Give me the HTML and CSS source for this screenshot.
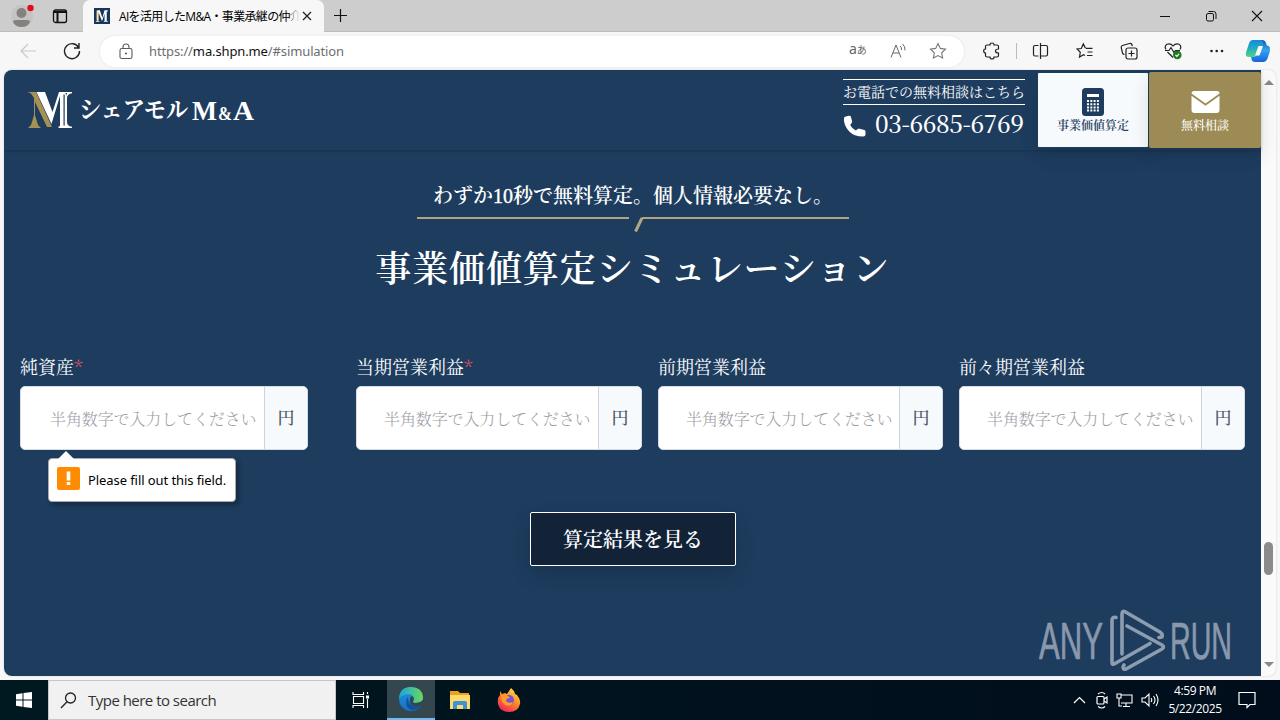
FILE: index.html
```html
<!DOCTYPE html>
<html lang="ja">
<head>
<meta charset="utf-8">
<title>事業価値算定シミュレーション</title>
<link rel="stylesheet" href="styles.css">
</head>
<body>
<div class="tabs">
  <svg class="profile" width="30" height="32" viewBox="0 0 30 32"><circle cx="15" cy="16" r="11" fill="#c6c4c2"/><circle cx="14.500" cy="13" r="5" fill="#85817e"/><path d="M6 22q0-2 3-2h11q3 0 3 2-2 5-8.500 5T6 22z" fill="#85817e"/><circle cx="23.500" cy="8" r="3.200" fill="#e00b1c"/></svg>
  <svg class="workspace" width="16" height="16" viewBox="0 0 16 16" fill="none" stroke="#111" stroke-width="1.300"><rect x="1.500" y="2" width="13" height="12.500" rx="2"/><path d="M2 4h12M5.500 5v9" stroke-width="2"/></svg>
  <div class="tab">
    <svg width="16" height="16" viewBox="0 0 44 36" preserveAspectRatio="none"><path fill="#17365b" d="M0 0h44v36H0z"/><path fill="#a59258" d="M6 6h7v22H6z"/><path fill="#fff" d="M9 5h7l7 17 6-17h9v3h-3v21h3v2H27v-2h2V13l-7 17L12 9v20h3v2H5v-2h4z"/></svg>
    <span class="tab-title">AIを活用したM&amp;A・事業承継の仲<span class="faded">介</span></span>
    <svg class="x" width="10" height="10" viewBox="0 0 10 10"><path d="M1 1l8 8M9 1L1 9" stroke="#222" stroke-width="1.300"/></svg>
  </div>
  <svg class="plus" width="15" height="15" viewBox="0 0 15 15"><path d="M7.500 1v13M1 7.500h13" stroke="#111" stroke-width="1.200"/></svg>
  <div class="window-buttons">
    <svg width="12" height="12" viewBox="0 0 12 12"><path d="M1 6.500h10" stroke="#111"/></svg>
    <svg width="12" height="12" viewBox="0 0 12 12" fill="none" stroke="#111"><rect x="1.500" y="3.500" width="7" height="7.500" rx="1.500"/><path d="M3.500 1.500h5q2.500 0 2.500 2.500v5"/></svg>
    <svg width="12" height="12" viewBox="0 0 12 12"><path d="M1 1l10 10M11 1L1 11" stroke="#111" stroke-width="1.100"/></svg>
  </div>
</div>
<div class="toolbar">
  <svg class="back" width="17" height="16" viewBox="0 0 17 16" fill="none" stroke="#c9c9c9" stroke-width="1.200"><path d="M16 8H1m7-7L1 8l7 7"/></svg>
  <svg class="reload" width="18" height="18" viewBox="0 0 18 18" fill="none" stroke="#222" stroke-width="1.400"><path d="M15.800 6A7.500 7.500 0 1 0 16.500 9M16 1v5h-5"/></svg>
  <div class="address">
    <svg width="14" height="17" viewBox="0 0 14 17" fill="none" stroke="#5b5b5b" stroke-width="1.100"><rect x="1" y="5.500" width="12" height="10" rx="1.800"/><path d="M4 5.500V4q0-3 3-3t3 3v1.500"/><circle cx="7" cy="10.500" r=".5" fill="#5b5b5b"/></svg>
    <span class="url">https://<b>ma.shpn.me</b>/#simulation</span>
    <span class="translate">a<small>あ</small></span>
    <svg class="read" width="17" height="16" viewBox="0 0 17 16" fill="none" stroke="#666"><path d="M1 14.500L6 2l5 12.500M3 10h6M10 3q2 1.500 1.500 4M12.500 1q3 2.500 2.500 6.500"/></svg>
    <svg class="fav" width="18" height="18" viewBox="0 0 18 18" fill="none" stroke="#777" stroke-width="1.100"><path d="M9 1.500l2.300 4.900 5.200.7-3.800 3.700.9 5.300L9 13.600l-4.600 2.500.9-5.300L1.500 7.100l5.200-.7z"/></svg>
  </div>
  <div class="tools">
    <svg width="18" height="18" viewBox="0 0 18 18" fill="none" stroke="#222" stroke-width="1.200"><path d="M4 3h3q0-2 2-2t2 2h3q1.500 0 1.500 1.500V7q-3 0-3 2t3 2v2.500q0 1.500-1.500 1.500h-3q0 2-2 2t-2-2H4q-1.500 0-1.500-1.500V11Q.7 11 .7 9t1.800-2V4.500Q2.500 3 4 3z"/></svg>
    <i class="divider"></i>
    <svg width="18" height="18" viewBox="0 0 18 18" fill="none" stroke="#222" stroke-width="1.200"><path d="M6.500 3.500H3Q1.500 3.500 1.500 5v7.500Q1.500 14 3 14h3.500M9 3.500h5q1.500 0 1.500 1.500v7.500Q15.500 14 14 14H9M8.500 1v16"/></svg>
    <svg width="18" height="18" viewBox="0 0 18 18" fill="none" stroke="#222" stroke-width="1.200"><path d="M10 6.300H16.500M11.500 10h5M11 13.500h5.500M9.500 6.300L7.300 2 5.300 6.500 1 7l3.300 3.300L3.500 15l4-2.300 1.500.8"/></svg>
    <svg width="18" height="18" viewBox="0 0 18 18" fill="none" stroke="#222" stroke-width="1.200"><rect x="6" y="6" width="11" height="11" rx="2"/><path d="M11.500 8.500v6M8.500 11.500h6M4.500 12.500Q3 12.500 2.500 11L1.200 5.500Q1 4 2.500 3.500l7-2q2-.5 2.500 1.500l.3 1.200"/></svg>
    <svg width="18" height="18" viewBox="0 0 18 18" fill="none" stroke="#222" stroke-width="1.200"><path d="M2 7.500Q0 4 3 2.200 6.500.8 9 4q2.500-3.200 6-1.800Q18 4 16 7.500M3.500 10L9 15.500M1 8.500h4l2-3 3 5 1.500-2H16"/><circle cx="13.300" cy="13" r="3.700" fill="#1d7d24" stroke="#1d7d24"/><path d="M11.500 13l1.300 1.300 2.300-2.500" stroke="#fff"/></svg>
    <svg width="18" height="18" viewBox="0 0 18 18" fill="#222"><circle cx="3.500" cy="9" r="1.300"/><circle cx="8.700" cy="9" r="1.300"/><circle cx="14" cy="9" r="1.300"/></svg>
    <svg class="copilot" width="26" height="24" viewBox="0 0 26 24"><defs><linearGradient id="ca" x2="0" y2="1"><stop stop-color="#1689dc"/><stop offset=".45" stop-color="#20a9c5"/><stop offset="1" stop-color="#4fd67d"/></linearGradient><linearGradient id="cb" x2="0" y2="1"><stop stop-color="#174fae"/><stop offset=".45" stop-color="#35a5ec"/><stop offset="1" stop-color="#1464e0"/></linearGradient></defs><path fill="url(#cb)" d="M11 1h6q3 0 4 3l.8 2.500Q25 6.500 25 10q0 2-.5 3.500l-2 6Q21 23 18 23h-8q-3 0-3.500-3L6 17.500h3q2.500 0 3.500-3L15.500 6z"/><path fill="url(#ca)" d="M8 1h7q2.500 0 2.800 2l1 3.500h-2.300q-2 0-3 3l-2 6q-1 2.500-3 2.500H4q-4 0-3-4.500L3.800 5Q5 1 8 1z"/><path fill="#f7f7f7" d="M13.500 7h4.500l-3.500 9.500h-4.500z"/></svg>
  </div>
</div>
<div class="viewport">
  <main class="page">
    <header class="header">
      <div class="brand">
        <svg width="46" height="38" viewBox="0 0 46 38"><path fill="#a59153" d="M.5 1H9l16 35h-5L8 11v13l3 10 3 3H1l3-3 3-10V7L4 2.500z"/><path fill="#fff" d="M9.500 1H18l7.500 20L32 1h13v1.200q-5 .8-5 5v23.600q0 4.500 5 5V37H31.500v-1.200l1.500-1V5L24.500 33z"/><path fill="#1d3c5e" d="M36.500 3.500h1.200v31h-1.200zM40 2h-2q2 1 2 3z"/></svg>
        <svg class="wordmark" width="186" height="38" viewBox="0 0 186 38"><text class="kana" x="2" y="27" textLength="109" lengthAdjust="spacingAndGlyphs">シェアモル</text><text class="latin" x="115" y="29" textLength="25" lengthAdjust="spacingAndGlyphs">M</text><text class="latin amp" x="141" y="29" textLength="14" lengthAdjust="spacingAndGlyphs">&amp;</text><text class="latin" x="156" y="29" textLength="21" lengthAdjust="spacingAndGlyphs">A</text></svg>
      </div>
      <div class="phone">
        <div class="phone-caption">お電話での無料相談はこちら</div>
        <div class="phone-number"><svg width="24" height="24" viewBox="0 0 24 24"><path fill="#fff" d="M2 2.800l3.600-1.100q1.700-.2 2.200.8l1.300 4.800q.3 1.200-.6 1.900L7.200 11q1.800 3.700 5.600 5.600l2-1.600q.8-.6 1.700-.3l5 1.400q1.200.5 1 1.600v2.800q0 2-2.300 2.100Q11 22.500 6 17.200.9 12 .9 5.100q0-1.900 1.100-2.300z"/></svg><span>03-6685-6769</span></div>
      </div>
      <a class="action light"><svg width="22" height="28" viewBox="0 0 22 28"><rect width="22" height="28" rx="3.500" fill="#1d3c5e"/><path stroke="#fff" stroke-width="3" d="M5 7.500h12"/><path stroke="#fff" stroke-width="2" stroke-dasharray="2 1.300" d="M5 13h12M5 16.200h12M5 19.400h12M5 22.600h12"/></svg><span>事業価値算定</span></a>
      <a class="action gold"><svg width="29" height="28" viewBox="0 0 29 28"><path fill="#fff" d="M3 3h23q2.500 0 2.500 2.500L14.500 15.500 .5 5.500Q.5 3 3 3z"/><path fill="#fff" d="M.5 7.700l14 10 14-10V22q0 3-3 3h-22q-3 0-3-3z"/></svg><span>無料相談</span></a>
    </header>
    <section class="simulation">
      <p class="lead">わずか<span>10</span>秒で無料算定。個人情報必要なし。</p>
      <svg class="rule" width="433" height="17" viewBox="0 0 433 17" fill="none" stroke="#b3a57f" stroke-width="2"><path d="M0 2h212M432 2H225"/><path d="M225 2l-6.500 13.500" stroke-width="3"/></svg>
      <h1>事業価値算定シミュレーション</h1>
      <form class="fields">
        <div class="field"><label>純資産<em>*</em></label><div class="input"><span class="placeholder">半角数字で入力してください</span><span class="unit">円</span></div>
          <div class="tooltip"><svg width="23" height="23" viewBox="0 0 23 23"><rect width="23" height="23" rx="2" fill="#ff8c00"/><path d="M9.700 4.500h3.600v9H9.700zM9.700 15h3.600v3H9.700z" fill="#fff"/></svg><span>Please fill out this field.</span></div>
        </div>
        <div class="field"><label>当期営業利益<em>*</em></label><div class="input"><span class="placeholder">半角数字で入力してください</span><span class="unit">円</span></div></div>
        <div class="field"><label>前期営業利益</label><div class="input"><span class="placeholder">半角数字で入力してください</span><span class="unit">円</span></div></div>
        <div class="field"><label>前々期営業利益</label><div class="input"><span class="placeholder">半角数字で入力してください</span><span class="unit">円</span></div></div>
      </form>
      <button class="submit" type="button">算定結果を見る</button>
    </section>
    <svg class="watermark" width="202" height="64" viewBox="0 0 202 64"><g class="mark-text"><text x="0" y="50" textLength="64" lengthAdjust="spacingAndGlyphs">ANY</text><text x="131" y="50" textLength="62" lengthAdjust="spacingAndGlyphs">RUN</text></g><g fill="none" stroke="#8d9db0" stroke-width="3.600" stroke-linejoin="round" stroke-linecap="round"><path d="M77 8.500q-4-1-4 3v42q0 3 3 1l35-20"/><path d="M83 45V5q0-4 3.500-2L121 23q3 2 2 5l-3 .5"/><path d="M88 17l35 19q3 2 0 4L87 60q-3 1-3-2l1-2"/></g></svg>
  </main>
  <div class="scrollbar"><i class="up"></i><i class="thumb"></i><i class="down"></i></div>
</div>
<footer class="taskbar">
  <div class="start"><svg width="16" height="16" viewBox="0 0 16 16" fill="#fff"><path d="M0 2.200l6.500-.9v6.200H0zM7.500 1.100L16 0v7.500H7.500zM0 8.500h6.500v6.200L0 13.800zM7.500 8.500H16V16l-8.500-1.100z"/></svg></div>
  <div class="search"><svg width="17" height="17" viewBox="0 0 17 17" fill="none" stroke="#222" stroke-width="1.300"><circle cx="10.500" cy="6" r="5"/><path d="M7 9.700L1 16"/></svg><span>Type here to search</span></div>
  <div class="app"><svg width="18" height="18" viewBox="0 0 18 18" fill="none" stroke="#fff" stroke-width="1.100"><path d="M1 1v2.500h10.500V1M1 17v-2.500h10.500V17M1.500 5.500h10v7h-10zM15.500 1v2M15.500 8v9"/><path fill="#fff" d="M14.500 5h2v2h-2z"/></svg></div>
  <div class="app active"><svg width="24" height="24" viewBox="0 0 24 24"><defs><linearGradient id="ea"><stop stop-color="#19a5dc"/><stop offset="1" stop-color="#6bd85c"/></linearGradient><linearGradient id="eb" x2="0" y2="1"><stop stop-color="#2395df"/><stop offset="1" stop-color="#1470c5"/></linearGradient></defs><circle cx="12" cy="12" r="12" fill="url(#eb)"/><path fill="url(#ea)" d="M0 11Q1 0 12 0t12 10q0 6-7 6-4 0-3-2 2-2 0-5-5-5-14 2z"/><path fill="#34474f" d="M13 9q3 3 1 5-1 2 3 2 4 0 7-3v5l-2 1q-8 2-11-3-1-5 2-7z"/><path fill="#15519b" d="M9 9q-5 11 4 14 6 0 9-5-8 3-12-2-2-4-1-7z"/></svg></div>
  <div class="app"><svg width="22" height="20" viewBox="0 0 22 20"><path fill="#eaa11e" d="M1 1h8l2 2h9v15H1z"/><path fill="#ffd96b" d="M1 5h20v14H1z"/><path fill="#3b92d4" d="M4 19v-6q0-2 2-2h10q2 0 2 2v6h-4v-4H8v4z"/></svg></div>
  <div class="app"><svg width="24" height="24" viewBox="0 0 24 24"><defs><linearGradient id="fa" x1=".8" x2=".2" y2="1"><stop stop-color="#ffe84a"/><stop offset=".45" stop-color="#ff8b22"/><stop offset="1" stop-color="#ed1c65"/></linearGradient></defs><path fill="url(#fa)" d="M3 3l2 3 3-1 2 1 4-6q3 2 4 6l2 1q4 5 3 9-2 8-11 8T1 16q-1-6 2-9z"/><circle cx="12" cy="12" r="5" fill="#7652d6"/><path fill="#ff9b27" d="M4 7q6-1 9 3-4 0-4 3 2 3 7 1-2 5-8 3-4-3-4-10z"/></svg></div>
  <div class="tray">
    <svg width="13" height="12" viewBox="0 0 13 12" fill="none" stroke="#fff" stroke-width="1.200"><path d="M1 9l5.500-5.500L12 9"/></svg>
    <svg class="meet" width="14" height="18" viewBox="0 0 14 18" fill="none" stroke="#fff" stroke-width="1.200"><rect x="2" y="5.500" width="7" height="7.500" rx="1"/><path d="M9 8l3-2v6l-3-2M3 3q4-3 7 0M3 15.500q4 3 7 0"/></svg>
    <svg width="17" height="16" viewBox="0 0 17 16" fill="none" stroke="#fff" stroke-width="1.100"><path d="M5 3h11v8H5M10 11v3M7 14.500h7M1 2h4v4H1zM3 6v8h3"/></svg>
    <svg width="18" height="16" viewBox="0 0 18 16" fill="none" stroke="#fff" stroke-width="1.100"><path d="M1 6h3l4-4v12l-4-4H1zM10 6q1.500 2 0 4M12.500 4q3 4 0 8M15 2q4 6 0 12"/></svg>
  </div>
  <div class="clock"><span>4:59 PM</span><span>5/22/2025</span></div>
  <svg class="notice" width="18" height="18" viewBox="0 0 18 18" fill="none" stroke="#fff" stroke-width="1.200"><path d="M1 1.500h16v12h-5l-3 3v-3H1z"/></svg>
</footer>
</body>
</html>
```
FILE: styles.css
```css
* { box-sizing: border-box; }
body { margin: 0; width: 1280px; height: 720px; overflow: hidden; background: #f7f7f7; font-family: "Noto Sans", "Noto Sans CJK JP", sans-serif; display: flex; flex-direction: column; white-space: nowrap; }
svg { display: block; flex: none; }
.tabs { height: 32px; flex: none; background: #cdcdcd; border-bottom: 1px solid #bdbdbd; display: flex; align-items: center; }
.profile { margin-left: 7px; }
.workspace { margin-left: 15px; }
.tab { width: 241px; height: 32px; margin-left: 15px; padding-left: 11px; background: #f7f7f7; border-radius: 7px 7px 0 0; display: flex; align-items: center; align-self: flex-start; }
.tab-title { font: 12px "Open Sans", "Noto Sans CJK JP", sans-serif; letter-spacing: -.66px; width: 175px; margin-left: 9px; }
.faded { color: transparent; background: linear-gradient(90deg, #777, #f7f7f7); -webkit-background-clip: text; background-clip: text; }
.x { margin-left: 8px; }
.plus { margin-left: 9px; }
.window-buttons { margin: 0 17px 0 auto; display: flex; gap: 34px; }
.toolbar { height: 38px; flex: none; display: flex; align-items: center; }
.back { margin-left: 20px; }
.reload { margin-left: 26px; }
.address { width: 864px; height: 31px; margin-left: 19px; padding-left: 19px; border-radius: 16px; background: #fff; box-shadow: 0 0 3px #e2e2e2; display: flex; align-items: center; }
.url { margin-left: 16px; width: 200px; color: #6e6e6e; font: 13px "Noto Sans", sans-serif; letter-spacing: -.12px; }
.url b { font-weight: 400; color: #111; }
.translate { margin-left: 500px; width: 20px; color: #666; font-size: 14px; line-height: 18px; margin-top: -3px; }
.translate small { font-size: 10px; }
.read { margin-left: 21px; }
.fav { margin-left: 22px; }
.tools { display: flex; align-items: center; margin-left: 19px; }
.tools svg + svg { margin-left: 26px; }
.divider { width: 1px; height: 16px; margin: 0 15px; background: #bcbcbc; }
.tools svg.copilot { margin-left: 19px; }
.viewport { height: 606px; width: 1272px; margin-left: 4px; flex: none; display: flex; border-radius: 8px; overflow: hidden; background: #fafafa; box-shadow: 0 0 2px #ccc; }
.page { width: 1257px; height: 606px; background: #1d3c5e; position: relative; color: #fff; font-family: "Noto Serif CJK JP", "Noto Sans CJK JP", serif; }
.header { height: 80px; padding-top: 2px; display: flex; align-items: flex-start; box-shadow: 0 1px 3px rgba(0, 0, 0, .2); }
.brand { display: flex; margin: 19px 0 0 23px; gap: 4px; }
.kana { font: 700 24px "Noto Serif CJK JP", "Noto Sans CJK JP", serif; fill: #fff; }
.latin { font: bold 28px "Liberation Serif", serif; fill: #fff; }
.latin.amp { font-size: 18px; }
.phone { margin: 7px 12px 0 auto; width: 182px; }
.phone-caption { height: 26px; border: solid #fff; border-width: 1px 0; font-size: 14px; line-height: 22px; font-weight: 400; }
.phone-number { display: flex; align-items: center; height: 38px; font: 500 24px "Noto Serif CJK JP", "Liberation Serif", serif; letter-spacing: -.4px; }
.phone-number svg { margin-top: 3px; }
.phone-number span { margin: -3px 0 0 8px; }
.action { width: 112px; height: 76px; padding-top: 16px; display: flex; flex-direction: column; align-items: center; font-size: 12px; line-height: 18px; font-weight: 500; border-radius: 2px; box-shadow: 0 8px 18px rgba(0, 0, 0, .12); }
.light { background: #f7fafc; color: #1d3c5e; border: 1px solid #1d3c5e; padding-top: 15px; font-weight: 600; }
.gold { background: #9c8b54; }
.simulation { display: flex; flex-direction: column; align-items: center; }
.lead { margin: 30px 0 0; font-family: "Liberation Serif", "Noto Serif CJK JP", "Noto Sans CJK JP", serif; font-size: 20px; line-height: 32px; font-weight: 600; padding-left: 1px; }
.lead span { font-weight: 400; -webkit-text-stroke: .4px #fff; }
.rule { margin: 4px 0 0 1px; }
h1 { margin: 7px 0 0; font-size: 36px; line-height: 54px; font-weight: 600; letter-spacing: .9px; }
.fields { display: grid; grid-template-columns: 320px 286px 285px 286px; column-gap: 16px; width: 1225px; margin-top: 59px; }
.field { position: relative; }
.field:first-child { width: 288px; }
label { display: block; height: 33px; font-size: 18px; line-height: 27px; font-weight: 400; }
label em { color: #e55363; font-style: normal; }
.input { height: 64px; display: flex; background: #fff; border: 1px solid #d5dce4; border-radius: 5px; overflow: hidden; }
.placeholder { flex: 1; padding-left: 27px; color: #9c9ca6; font-size: 16px; line-height: 64px; font-weight: 300; letter-spacing: -.12px; }
.field:first-child .placeholder { padding-left: 29px; }
.unit { width: 43px; flex: none; border-left: 1px solid #cbd5e0; background: #f7fafc; color: #4a5568; text-align: center; font-size: 17px; line-height: 59px; font-weight: 500; }
.tooltip { position: absolute; left: 28px; top: 105px; width: 188px; height: 44px; padding-left: 8px; background: #fff; border: 1px solid #ababab; border-radius: 4px; box-shadow: 3px 3px 4px rgba(0, 0, 0, .3); color: #000; display: flex; align-items: center; font: 13px "Noto Sans", sans-serif; letter-spacing: -.08px; }
.tooltip::before { content: ""; position: absolute; left: 9px; top: -8px; border: 8px solid transparent; border-top: 0; border-bottom-color: #fff; }
.tooltip svg { margin-top: -4px; }
.tooltip span { margin-left: 8px; }
.submit { width: 206px; height: 54px; margin-top: 62px; padding: 0 0 2px 1px; background: #122338; color: #fff; border: 1px solid #fff; border-radius: 2px; font: 600 20px "Noto Serif CJK JP", "Noto Sans CJK JP", serif; box-shadow: 0 8px 20px rgba(0, 0, 0, .15); }
.watermark { position: absolute; left: 1035px; top: 539px; }
.mark-text { font: 51px "Liberation Sans", sans-serif; fill: #8998ac; stroke: #8998ac; stroke-width: .7px; }
.scrollbar { width: 15px; display: flex; flex-direction: column; align-items: center; padding: 10px 0 9px; }
.up { border: 5px solid transparent; border-top: 0; border-bottom-color: #888; }
.down { margin-top: auto; border: 5px solid transparent; border-bottom: 0; border-top-color: #888; }
.thumb { width: 9px; height: 33px; margin-top: 457px; border-radius: 5px; background: #8b8b8b; }
.taskbar { height: 40px; margin-top: 4px; flex: none; background: linear-gradient(90deg, #001820, #010d1b); display: flex; align-items: center; color: #fff; }
.start { width: 48px; padding-left: 16px; }
.search { width: 288px; height: 40px; background: #f1f1f1; border: 1px solid #c6c6c6; display: flex; align-items: center; padding-left: 11px; color: #333; font: 15px "Open Sans", sans-serif; letter-spacing: -.52px; }
.search span { margin-left: 11px; }
.app { width: 49px; height: 40px; display: flex; align-items: center; justify-content: center; }
.active { width: 48px; background: #34474f; border-bottom: 2px solid #76b9ed; margin-left: 2px; }
.tray { margin-left: auto; display: flex; align-items: center; gap: 8px; }
.meet { margin: 0 -1px 0 1px; }
.clock { width: 64px; margin-left: 4px; font: 12px "Open Sans", sans-serif; line-height: 18px; letter-spacing: -.4px; display: flex; flex-direction: column; align-items: center; }
.notice { margin: 0 24px 0 11px; }
```
